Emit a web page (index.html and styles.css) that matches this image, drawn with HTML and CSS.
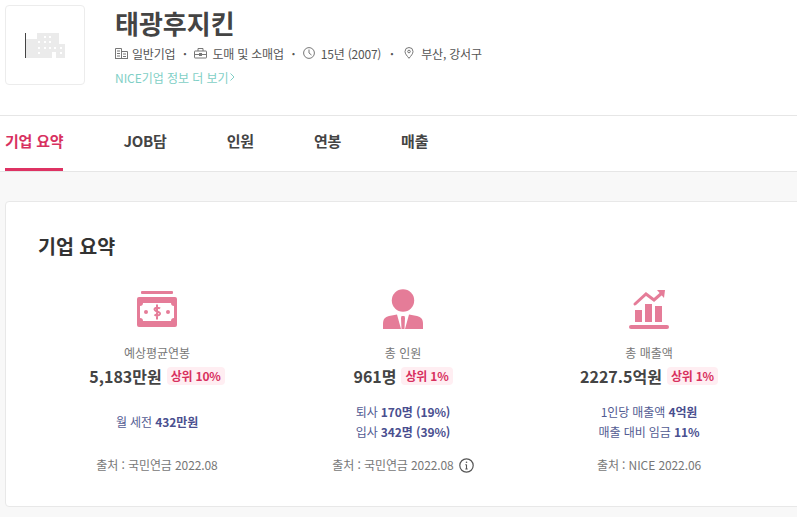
FILE: index.html
```html
<!DOCTYPE html>
<html lang="ko">
<head>
<meta charset="utf-8">
<title>태광후지킨</title>
<link rel="stylesheet" href="styles.css">
</head>
<body>
<header class="head">
  <div class="logo">
    <svg width="40" height="25" viewBox="0 0 40 25">
      <path fill="#ebebeb" d="M1 6h11V0h22v11h6v14H31v-6h-4v6H1z"/>
      <rect x="0" y="0" width="1" height="25" fill="#444"/>
      <g fill="#fff"><rect x="19" y="3" width="2" height="2"/><rect x="24" y="3" width="2" height="2"/><rect x="13" y="8" width="2" height="2"/><rect x="19" y="8" width="2" height="2"/><rect x="24" y="8" width="2" height="2"/><rect x="13" y="14" width="2" height="2"/><rect x="19" y="14" width="2" height="2"/><rect x="24" y="14" width="2" height="2"/><rect x="29" y="14" width="2" height="2"/><rect x="35" y="14" width="2" height="2"/><rect x="13" y="19" width="2" height="2"/><rect x="35" y="19" width="2" height="2"/></g>
    </svg>
  </div>
  <div class="info">
    <h1 class="name">태광후지킨</h1>
    <div class="meta">
      <span class="meta-item">
        <svg class="meta-icon" width="13" height="12" viewBox="0 0 13 12" fill="none" stroke="#777"><path d="M.5 11.5V1.5h6v10zM6.500 4.500h6v7h-6zM0 11.500h13M2 4h3M2 6.500h3M2 9h3M8 7h3M8 9.500h3"/></svg>
        일반기업
      </span>
      <span class="dot">·</span>
      <span class="meta-item wide">
        <svg class="meta-icon" width="13" height="12" viewBox="0 0 13 12" fill="none" stroke="#777"><path d="M1 4h11a.5.5 0 0 1 .5.5v6a.5.5 0 0 1-.5.5H1a.5.5 0 0 1-.5-.5v-6A.5.5 0 0 1 1 4zM4 4V1.500h5V4M.5 7.500h12"/><rect x="5" y="6" width="3" height="3" fill="#777" stroke="none"/></svg>
        도매 및 소매업
      </span>
      <span class="dot">·</span>
      <span class="meta-item wide">
        <svg class="meta-icon clock" width="12" height="12" viewBox="0 0 12 12" fill="none" stroke="#777"><circle cx="6" cy="6" r="5.400"/><path d="M6 2.500V6l2.500 2"/></svg>
        15년 (2007)
      </span>
      <span class="dot dot-last">·</span>
      <span class="meta-item place">
        <svg class="meta-icon pin" width="10" height="12" viewBox="0 0 10 12" fill="none" stroke="#777"><path d="M5 11.300C3 8.800 1 6.800 1 4.500a4 4 0 0 1 8 0c0 2.300-2 4.300-4 6.800z"/><circle cx="5" cy="4.500" r="1.300"/></svg>
        부산, 강서구
      </span>
    </div>
    <a class="more">NICE기업 정보 더 보기<svg class="chev" width="5" height="8" viewBox="0 0 5 8" fill="none" stroke="#7fcfc6"><path d="M.5.500 4 4 .5 7.500"/></svg></a>
  </div>
</header>

<nav class="tabs">
  <a class="tab active">기업 요약</a>
  <a class="tab">JOB담</a>
  <a class="tab">인원</a>
  <a class="tab">연봉</a>
  <a class="tab">매출</a>
</nav>

<main class="content">
  <section class="card">
    <h2 class="card-title">기업 요약</h2>
    <div class="cols">
      <div class="col">
        <svg class="stat-icon money" width="40" height="36" viewBox="0 0 40 36">
          <rect x="4" y="0" width="32" height="3" rx="1" fill="#e57c98"/>
          <path fill="#e57c98" fill-rule="evenodd" d="M2 6h36a2 2 0 0 1 2 2v26a2 2 0 0 1-2 2H2a2 2 0 0 1-2-2V8a2 2 0 0 1 2-2zM6 12a3 3 0 0 1-3 3v12a3 3 0 0 1 3 3h28a3 3 0 0 1 3-3V15a3 3 0 0 1-3-3z"/>
          <circle cx="9" cy="21" r="2" fill="#e57c98"/><circle cx="31" cy="21" r="2" fill="#e57c98"/>
          <path fill="none" stroke="#e57c98" stroke-width="2" d="M23 17.500c-1-1-5-1.500-5.500.5-.5 3 6 2 5.500 5-.5 2-4.500 1.500-5.500.5M20 13.500v15"/>
        </svg>
        <div class="stat-label">예상평균연봉</div>
        <div class="stat-row"><strong class="stat-value">5,183만원</strong><span class="badge">상위 10%</span></div>
        <div class="details single"><p class="detail">월 세전 <b>432만원</b></p></div>
        <div class="source">출처 : 국민연금 2022.08</div>
      </div>
      <div class="col">
        <svg class="stat-icon" width="40" height="40" viewBox="0 0 40 40">
          <circle cx="20" cy="11.500" r="11.200" fill="#e57c98"/>
          <path fill="#e57c98" d="M14 25.500 18 40H0v-5c0-5 2-7 6-8zM26 25.500 22 40h18v-5c0-5-2-7-6-8zM18.500 27h3l.5 2-.500 11h-3L18 29z"/>
        </svg>
        <div class="stat-label">총 인원</div>
        <div class="stat-row"><strong class="stat-value">961명</strong><span class="badge">상위 1%</span></div>
        <div class="details"><p class="detail">퇴사 <b>170명 (19%)</b></p><p class="detail">입사 <b>342명 (39%)</b></p></div>
        <div class="source">출처 : 국민연금 2022.08<svg class="info-icon" width="15" height="15" viewBox="0 0 15 15" fill="none" stroke="#555"><circle cx="7.500" cy="7.500" r="6.700" stroke-width="1.200"/><path d="M7.500 6.500v4.500M6.300 6.700h1.200M6.300 11h2.400" stroke-width="1.100"/><circle cx="7.500" cy="4.300" r=".8" fill="#555" stroke="none"/></svg></div>
      </div>
      <div class="col">
        <svg class="stat-icon" width="40" height="40" viewBox="0 0 40 40">
          <path fill="none" stroke="#e57c98" stroke-width="3" stroke-linecap="round" d="M6 15 17 5l8 6 8-7"/>
          <path fill="#e57c98" d="M28 1h8l-1 8z"/>
          <rect x="6" y="21" width="7" height="12" fill="#e57c98"/><rect x="16" y="15" width="7" height="18" fill="#e57c98"/><rect x="26" y="17" width="7" height="16" fill="#e57c98"/>
          <rect x="0" y="36" width="40" height="4" rx="2" fill="#e57c98"/>
        </svg>
        <div class="stat-label">총 매출액</div>
        <div class="stat-row"><strong class="stat-value">2227.5억원</strong><span class="badge">상위 1%</span></div>
        <div class="details"><p class="detail">1인당 매출액 <b>4억원</b></p><p class="detail">매출 대비 임금 <b>11%</b></p></div>
        <div class="source">출처 : NICE 2022.06</div>
      </div>
    </div>
  </section>
</main>
</body>
</html>
```
FILE: styles.css
```css
* { box-sizing: border-box; }
html, body { margin: 0; padding: 0; }
body {
  width: 797px;
  height: 517px;
  overflow: hidden;
  background: #f8f8f8;
  color: #444;
  font-family: "Noto Sans CJK KR", "Noto Sans", sans-serif;
}
.head {
  display: flex;
  height: 116px;
  padding: 5px 0 0 5px;
  background: #fff;
  border-bottom: 1px solid #e6e6e6;
}
.logo {
  display: flex;
  align-items: center;
  justify-content: center;
  width: 80px;
  height: 80px;
  margin-right: 30px;
  border: 1px solid #ececec;
  border-radius: 4px;
}
.info { display: flex; flex-direction: column; }
.name {
  margin: 0;
  height: 36px;
  font-size: 26px;
  line-height: 36px;
  font-weight: 700;
  color: #444;
}
.meta {
  display: flex;
  align-items: center;
  height: 20px;
  margin-top: 2px;
  font-size: 12px;
  letter-spacing: -0.2px;
  color: #555;
  white-space: nowrap;
}
.meta-item { display: flex; align-items: center; }
.meta-icon { margin-right: 4px; }
.wide .meta-icon { margin-right: 5px; }
.wide .clock { margin-right: 6px; }
.pin { margin-left: 2px; margin-right: 7px; }
.dot { width: 19px; text-align: center; font-weight: 700; }
.dot-last { width: 21px; }
.more {
  display: flex;
  align-items: center;
  height: 20px;
  margin-top: 4px;
  font-size: 12px;
  letter-spacing: -0.05px;
  color: #7fcfc6;
}
.chev { margin-left: 1px; }
.tabs {
  display: flex;
  gap: 60px;
  height: 56px;
  padding-left: 5px;
  background: #fff;
  border-bottom: 1px solid #e6e6e6;
}
.tab {
  display: block;
  height: 55px;
  padding-top: 13px;
  font-size: 15px;
  letter-spacing: -0.2px;
  line-height: 24px;
  font-weight: 700;
  color: #444;
}
.tab.active {
  color: #d8315f;
  border-bottom: 3px solid #de3263;
}
.content { padding: 29px 0 0 5px; }
.card {
  width: 810px;
  height: 306px;
  padding: 26px 0 0 28px;
  background: #fff;
  border: 1px solid #e8e8e8;
  border-radius: 4px;
}
.card-title {
  margin: 0 0 25px 4px;
  font-size: 19.500px;
  line-height: 36px;
  font-weight: 700;
  color: #333;
}
.cols { display: flex; }
.col {
  display: flex;
  flex-direction: column;
  align-items: center;
  width: 246px;
  height: 200px;
}
.stat-icon { height: 40px; flex: none; }
.stat-icon.money { height: 36px; margin: 2px 0; }
.stat-label {
  margin-top: 15px;
  font-size: 12px;
  line-height: 18px;
  color: #777;
}
.stat-row {
  display: flex;
  align-items: center;
  height: 22px;
  margin-top: 3px;
}
.stat-value { font-size: 16px; line-height: 22px; font-weight: 700; color: #444; }
.badge {
  margin-left: 5px;
  padding: 0 4px;
  height: 18px;
  border-radius: 4px;
  background: #ffeef2;
  color: #d8315f;
  font-size: 12px;
  letter-spacing: -0.2px;
  line-height: 18px;
  font-weight: 700;
}
.details {
  display: flex;
  flex-direction: column;
  justify-content: center;
  height: 40px;
  margin-top: 15px;
}
.detail {
  margin: 0;
  font-size: 12px;
  letter-spacing: -0.1px;
  line-height: 20px;
  color: #525b92;
  text-align: center;
}
.detail b { font-weight: 700; color: #4a4f8f; }
.source {
  display: flex;
  align-items: center;
  height: 18px;
  margin-top: 14px;
  font-size: 12px;
  letter-spacing: -0.1px;
  line-height: 18px;
  color: #777;
}
.info-icon { margin-left: 5px; }
```
